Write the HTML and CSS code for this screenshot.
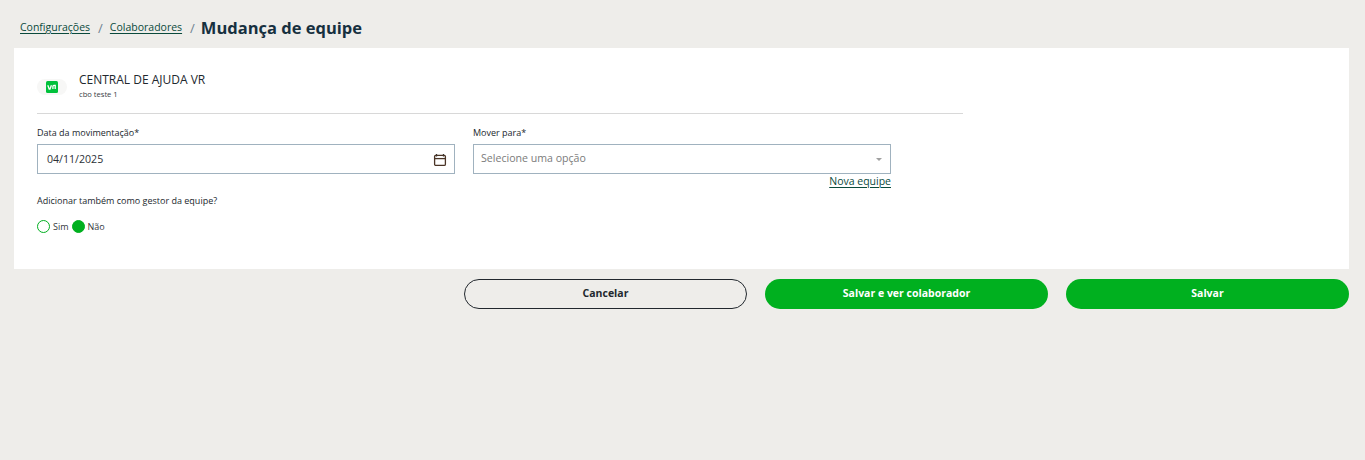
FILE: index.html
```html
<!DOCTYPE html>
<html lang="pt-BR">
<head>
<meta charset="utf-8">
<title>Mudança de equipe</title>
<link rel="stylesheet" href="styles.css">
</head>
<body>
<main class="page">
  <nav class="crumbs">
    <a class="crumb" href="#">Configurações</a>
    <span class="sep">/</span>
    <a class="crumb" href="#">Colaboradores</a>
    <span class="sep">/</span>
    <h1 class="title">Mudança de equipe</h1>
  </nav>
  <section class="card">
    <div class="inner">
      <header class="company">
        <div class="logo-pill">
          <svg class="logo" viewBox="0 0 12 12" width="12" height="12" aria-hidden="true">
            <rect width="12" height="12" rx="1.5" fill="#00c13b"/>
            <path d="M1.8 4.2l1.4 3.8h.8l1.4-3.8M6.9 8V5.4q0-1.1 1-1.1h1.3V8" fill="none" stroke="#fff" stroke-width="1.3"/>
          </svg>
        </div>
        <div class="company-text">
          <div class="company-name">CENTRAL DE AJUDA VR</div>
          <div class="company-sub">cbo teste 1</div>
        </div>
      </header>
      <div class="fields">
        <div class="field">
          <label class="label">Data da movimentação*</label>
          <div class="input">
            <span class="value">04/11/2025</span>
            <svg class="cal" viewBox="0 0 14 14" width="14" height="14" aria-hidden="true">
              <path d="M3.5 1v2.5M10.5 1v2.5" stroke="#333" stroke-width="1.3" fill="none"/>
              <rect x="1.6" y="2.4" width="10.8" height="10" rx="1.2" fill="none" stroke="#4a3426" stroke-width="1.3"/>
              <path d="M1.6 5.6h10.8" stroke="#4a3426" stroke-width="1.3"/>
            </svg>
          </div>
        </div>
        <div class="field">
          <label class="label">Mover para*</label>
          <div class="input select">
            <span class="placeholder">Selecione uma opção</span>
            <span class="caret"></span>
          </div>
          <a class="new-team" href="#">Nova equipe</a>
        </div>
      </div>
      <p class="question">Adicionar também como gestor da equipe?</p>
      <div class="radios">
        <span class="radio"></span><span class="radio-label">Sim</span>
        <span class="radio checked"></span><span class="radio-label">Não</span>
      </div>
    </div>
  </section>
  <footer class="actions">
    <button class="btn outline">Cancelar</button>
    <button class="btn primary">Salvar e ver colaborador</button>
    <button class="btn primary">Salvar</button>
  </footer>
</main>
</body>
</html>
```
FILE: styles.css
```css
* { box-sizing: border-box; }
html, body { margin: 0; height: 100%; }
body {
  background: #eeedea;
  font-family: "Open Sans", "Noto Sans", sans-serif;
  color: #22282e;
  overflow: hidden;
}
.page { padding: 0 16px 0 14px; }
.crumbs {
  display: flex;
  align-items: center;
  height: 48px;
  padding: 8px 0 0 6px;
}
.crumb {
  font-size: 10.5px;
  line-height: 16px;
  color: #0a4a3c;
  text-decoration: underline;
  text-underline-offset: 2px;
  margin-top: -2px;
}
.sep { font-size: 13px; color: #6d8191; margin: 0 7px 0 8px; }
.title {
  margin: 0 0 0 -1px;
  font-size: 16.5px;
  line-height: 24px;
  font-weight: 700;
  color: #16303f;
}
.card { background: #fff; height: 221px; padding: 0 23px; }
.inner { width: 926px; }
.company {
  display: flex;
  align-items: center;
  height: 66px;
  padding-top: 12px;
  border-bottom: 1px solid #d8d8d8;
}
.logo-pill {
  width: 30px;
  height: 16px;
  border-radius: 8px;
  background: #f7f7f6;
  display: flex;
  align-items: center;
  justify-content: center;
  margin-right: 12px;
}
.logo { display: block; }
.company-text { margin-top: -3px; }
.company-name { font-size: 12px; line-height: 17px; color: #22282e; }
.company-sub { font-size: 7.6px; line-height: 11px; margin-top: 1px; color: #3a4046; }
.fields { display: flex; gap: 18px; margin-top: 12px; }
.field { width: 418px; display: flex; flex-direction: column; }
.label { font-size: 9px; line-height: 13px; color: #22282e; }
.input {
  height: 30px;
  margin-top: 5px;
  border: 1px solid #a0b2bf;
  background: #fff;
  display: flex;
  align-items: center;
  justify-content: space-between;
}
.value { font-size: 10.6px; line-height: 14px; padding-left: 9px; margin-top: -1px; color: #2b3036; }
.cal { margin-right: 7px; margin-top: 2px; }
.select { padding-right: 8px; }
.placeholder { font-size: 10.6px; line-height: 14px; padding-left: 7px; margin-top: -3px; color: #7b7b7b; }
.caret {
  width: 0;
  height: 0;
  border-left: 3px solid transparent;
  border-right: 3px solid transparent;
  border-top: 3px solid #a0a0a0;
  margin-top: 1px;
}
.new-team {
  align-self: flex-end;
  font-size: 10.5px;
  line-height: 15px;
  color: #0a4a3c;
  text-decoration: underline;
  text-underline-offset: 2px;
}
.question { margin: 5px 0 0; font-size: 9px; line-height: 13px; color: #22282e; }
.radios { display: flex; align-items: center; margin-top: 13px; height: 13px; }
.radio {
  width: 13px;
  height: 13px;
  border-radius: 50%;
  border: 1px solid #00b01f;
  background: #fff;
}
.radio.checked { background: #00b01f; }
.radio-label { font-size: 9px; line-height: 13px; margin: 0 3px; color: #33383d; }
.actions { display: flex; justify-content: flex-end; gap: 18px; margin-top: 10px; }
.btn {
  width: 283px;
  height: 30px;
  border-radius: 15px;
  font-family: inherit;
  font-size: 10.5px;
  font-weight: 700;
  padding: 0 0 2px;
}
.outline { background: transparent; border: 1px solid #22282e; color: #22282e; }
.primary { background: #00b01f; border: 0; color: #fff; }
```
